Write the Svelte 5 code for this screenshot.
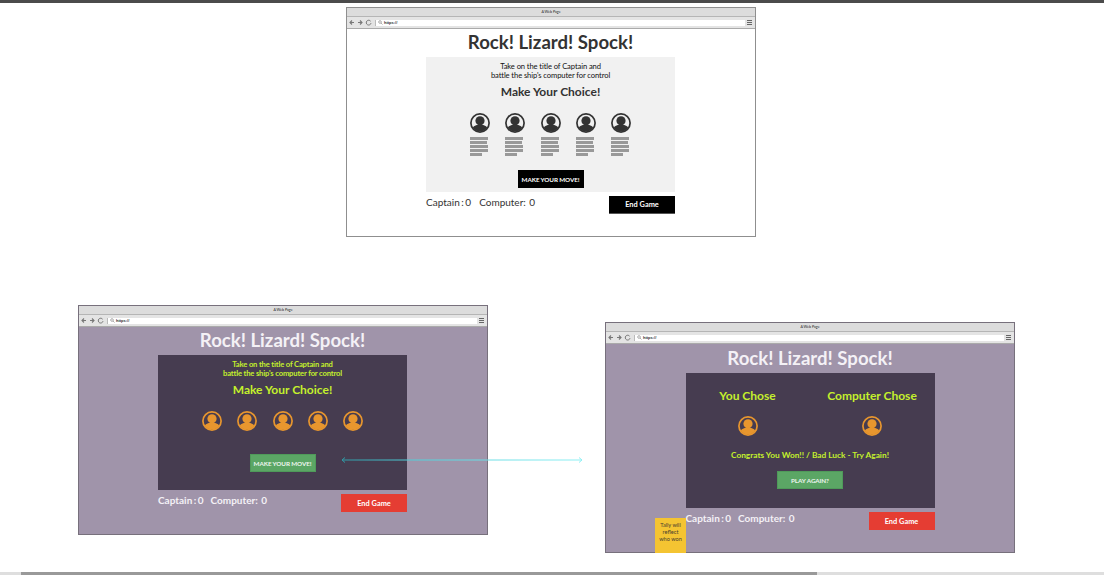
<script>
  const picks = [0, 1, 2, 3, 4];
  const rows = [18, 17, 18, 18, 12];
</script>

{#snippet avatar()}
  <svg class="avatar" viewBox="0 0 20 20" aria-hidden="true">
    <defs>
      <clipPath id="av"><circle cx="10" cy="10" r="8.6" /></clipPath>
    </defs>
    <circle cx="10" cy="10" r="9.1" fill="none" stroke="currentColor" stroke-width="1.7" />
    <g clip-path="url(#av)" fill="currentColor">
      <circle cx="10" cy="7.8" r="4.6" />
      <ellipse cx="10" cy="18" rx="8.6" ry="6.6" />
    </g>
  </svg>
{/snippet}

{#snippet chrome()}
  <div class="titlebar">A Web Page</div>
  <div class="toolbar">
    <svg class="nav" viewBox="0 0 24 7" aria-hidden="true">
      <path d="M5 3.5H1M3 1.5 1 3.5l2 2M9 3.5h4M11 1.5l2 2-2 2" fill="none" stroke="#777" stroke-width="1.1" />
      <path d="M21.6 2.2a2.4 2.4 0 1 0 .4 2" fill="none" stroke="#777" stroke-width="1" />
    </svg>
    <div class="url">
      <svg viewBox="0 0 6 6" aria-hidden="true"><circle cx="2.4" cy="2.4" r="1.6" fill="none" stroke="#777" stroke-width=".7" /><path d="m3.6 3.6 1.8 1.8" stroke="#777" stroke-width=".7" /></svg>
      <span>https://</span>
    </div>
    <div class="menu"><i></i><i></i><i></i></div>
  </div>
{/snippet}

{#snippet tally()}
  <div class="footer">
    <p class="score"><span class="cap">Captain : 0</span><span class="com">Computer: 0</span></p>
    <button class="end">End Game</button>
  </div>
{/snippet}

{#snippet choose()}
  <p class="intro">Take on the title of Captain and<br />battle the ship's computer for control</p>
  <h2>Make Your Choice!</h2>
  <div class="choices">
    {#each picks as p (p)}
      <div class="choice">
        {@render avatar()}
        <div class="copy">
          {#each rows as w, i (i)}<b style="width:{w}px"></b>{/each}
        </div>
      </div>
    {/each}
  </div>
  <button class="move">MAKE YOUR MOVE!</button>
{/snippet}

<div class="canvas">
  <div class="topbar"></div>

  <section class="win mono" style="left:346px;top:7px">
    {@render chrome()}
    <div class="body">
      <h1>Rock! Lizard! Spock!</h1>
      <div class="panel">{@render choose()}</div>
      {@render tally()}
    </div>
  </section>

  <section class="win styled" style="left:78px;top:305px">
    {@render chrome()}
    <div class="body">
      <h1>Rock! Lizard! Spock!</h1>
      <div class="panel">{@render choose()}</div>
      {@render tally()}
    </div>
  </section>

  <section class="win styled third" style="left:605px;top:322px">
    {@render chrome()}
    <div class="body">
      <h1>Rock! Lizard! Spock!</h1>
      <div class="panel result">
        <div class="versus">
          <div class="side"><h3>You Chose</h3>{@render avatar()}</div>
          <div class="side"><h3>Computer Chose</h3>{@render avatar()}</div>
        </div>
        <p class="outcome">Congrats You Won!! / Bad Luck - Try Again!</p>
        <button class="move">PLAY AGAIN?</button>
      </div>
      {@render tally()}
    </div>
  </section>

  <div class="sticky">Tally will<br />reflect<br />who won</div>

  <svg class="link" viewBox="0 0 242 8" aria-hidden="true">
    <defs>
      <linearGradient id="lg" x1="0" x2="1" y1="0" y2="0">
        <stop offset="0" stop-color="#2f9aa6" />
        <stop offset=".3" stop-color="#52d0da" />
        <stop offset="1" stop-color="#8ff0f4" />
      </linearGradient>
    </defs>
    <path d="M1 4h240M4 1.5 1 4l3 2.5M238 1.5 241 4l-3 2.5" fill="none" stroke="url(#lg)" stroke-width="1" />
  </svg>

  <div class="scrollbar"><div class="thumb"></div></div>
</div>

<style>
  :global(body) { margin: 0; background: #fff; }
  * { box-sizing: border-box; }
  .canvas {
    position: relative;
    width: 1104px;
    height: 575px;
    overflow: hidden;
    font-family: Lato, "Open Sans", sans-serif;
  }
  .topbar { height: 3px; background: #4b4b4b; }
  .win {
    position: absolute;
    width: 410px;
    height: 230px;
    display: flex;
    flex-direction: column;
    border: 1px solid #8f8f8f;
    background: #fff;
  }
  .third { height: 231px; }
  .titlebar {
    height: 9px;
    flex: none;
    background: #dcdcdc;
    border-bottom: 1px solid #b5b5b5;
    font: 3.6px/8px Lato, sans-serif;
    color: #222;
    text-align: center;
  }
  .toolbar {
    height: 12px;
    flex: none;
    display: flex;
    align-items: center;
    padding: 0 2px;
    background: #e4e4e4;
    border-bottom: 1px solid #aaa;
  }
  .nav { width: 24px; height: 7px; flex: none; }
  .url {
    flex: 1;
    height: 6px;
    margin-left: 2px;
    display: flex;
    align-items: center;
    gap: 1px;
    padding-left: 2px;
    background: #fff;
    border: 1px solid #bbb;
    border-width: 0 0 0 1px;
    font: bold 4px/6px "Liberation Sans", sans-serif;
    color: #333;
  }
  .url svg { width: 5px; height: 5px; flex: none; }
  .menu {
    width: 8px;
    flex: none;
    padding-left: 2px;
    display: flex;
    flex-direction: column;
    gap: 1px;
  }
  .menu i { display: block; height: 1px; width: 5px; background: #666; }
  .body {
    flex: 1;
    display: flex;
    flex-direction: column;
    align-items: center;
    min-height: 0;
    padding-right: 1px;
  }
  .third .body { padding: 1px 0 0; }
  h1 {
    margin: 0;
    height: 28px;
    font-size: 18.6px;
    line-height: 27px;
    font-weight: 700;
    white-space: nowrap;
  }
  .panel {
    width: 249px;
    height: 135px;
    flex: none;
    display: flex;
    flex-direction: column;
    align-items: center;
    padding-top: 5px;
  }
  .intro {
    margin: 0;
    font-size: 7.6px;
    line-height: 9px;
    height: 18px;
    letter-spacing: -0.1px;
    text-align: center;
    white-space: nowrap;
  }
  h2 {
    margin: 3px 0 0;
    font-size: 12px;
    line-height: 18px;
    font-weight: 700;
    white-space: nowrap;
  }
  .choices {
    display: flex;
    gap: 15.3px;
    height: 57px;
    margin-top: 12px;
  }
  .choice { width: 20px; display: flex; flex-direction: column; }
  .avatar { width: 20px; height: 20px; display: block; flex: none; }
  .copy { margin-top: 4px; display: flex; flex-direction: column; gap: 1px; }
  .copy b { display: block; height: 3px; background: #999; }
  button {
    border: 0;
    padding: 0;
    font-family: inherit;
    cursor: pointer;
  }
  .move {
    width: 66px;
    height: 18px;
    flex: none;
    margin-top: auto;
    margin-bottom: 4px;
    font-size: 6.3px;
    font-weight: 700;
    letter-spacing: -0.1px;
    white-space: nowrap;
  }
  .footer {
    width: 249px;
    height: 18px;
    margin-top: 4px;
    display: flex;
    justify-content: space-between;
    flex: none;
  }
  .score {
    margin: 0;
    display: flex;
    gap: 7px;
    font-size: 10px;
    line-height: 12px;
  }
  .cap { word-spacing: -1px; }
  .com { word-spacing: 1px; }
  .end {
    width: 66px;
    height: 18px;
    font-size: 7.4px;
    font-weight: 700;
  }

  .mono h1 { color: #333; }
  .mono .panel { background: #f1f1f1; color: #333; }
  .mono .intro { color: #111; }
  .mono .avatar { color: #333; }
  .mono .move { background: #000; color: #fff; }
  .mono .end { background: #000; color: #fff; border-bottom: 1px solid #555; }
  .mono .score { color: #333; gap: 8px; }

  .styled { background: #a094aa; border-color: #77707c; }
  .styled h1 { color: #f4f1f6; }
  .styled .panel { background: #463c50; color: #c4f02c; }
  .styled .intro { font-weight: 700; color: #c4f02c; letter-spacing: -0.15px; }
  .styled .avatar { color: #e8962e; }
  .styled .copy { display: none; }
  .styled .move { background: #5ba665; color: #edf5ee; border: 1px solid #4f9a5a; margin-bottom: 18px; }
  .styled .result .move { margin-bottom: 19px; }
  .styled .end { background: #e53d33; color: #fff; }
  .styled .score { color: #f4f1f6; font-weight: 700; }

  .result { padding-top: 0; }
  .versus {
    width: 100%;
    display: flex;
    padding: 14px 0 0 24px;
    height: 73px;
    flex: none;
  }
  .side {
    display: flex;
    flex-direction: column;
    align-items: center;
    gap: 12px;
  }
  .side:first-child { width: 76px; margin-right: 24px; }
  .side:last-child { width: 125px; }
  h3 {
    margin: 0;
    height: 17px;
    font-size: 12px;
    line-height: 17px;
    font-weight: 700;
    white-space: nowrap;
  }
  .outcome {
    margin: 4px 0 0;
    font-size: 8.3px;
    line-height: 11px;
    font-weight: 700;
    white-space: nowrap;
  }

  .sticky {
    position: absolute;
    left: 655px;
    top: 518px;
    width: 31px;
    height: 35px;
    padding: 3px 1px 0;
    background: #f4c432;
    color: #4a4030;
    font-size: 5.6px;
    line-height: 7px;
    text-align: center;
  }
  .link {
    position: absolute;
    left: 341px;
    top: 456px;
    width: 242px;
    height: 8px;
  }
  .scrollbar {
    position: absolute;
    left: 0;
    right: 0;
    bottom: 0;
    height: 3px;
    background: #dedede;
  }
  .thumb {
    width: 796px;
    height: 3px;
    margin-left: 21px;
    background: #999;
  }
</style>
